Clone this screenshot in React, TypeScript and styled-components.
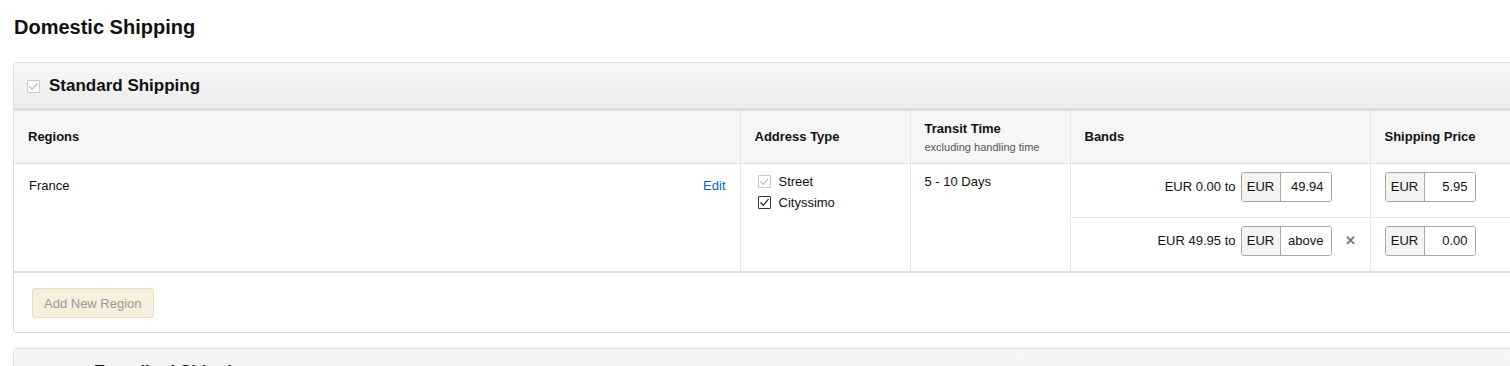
import styled, { createGlobalStyle } from "styled-components";

const GlobalStyle = createGlobalStyle`
    body {
        margin: 0;
        overflow: hidden;
        background: #fff;
        font-family: "Liberation Sans", Arial, sans-serif;
        color: #111;
    }
`;

type Band = { from: string; to: string; price: string; removable: boolean };

const bands: Band[] = [
    { from: "EUR 0.00 to", to: "49.94", price: "5.95", removable: false },
    { from: "EUR 49.95 to", to: "above", price: "0.00", removable: true },
];

const Check = ({ checked = true, disabled = false }: { checked?: boolean; disabled?: boolean }) => (
    <CheckBox $disabled={disabled}>
        {checked && (
            <svg width="11" height="11" viewBox="0 0 11 11">
                <path d="M1.5 5.5 L4.3 8.3 L9.5 2.2" fill="none" stroke="currentColor" strokeWidth="1.2" />
            </svg>
        )}
    </CheckBox>
);

const MoneyInput = ({ value }: { value: string }) => (
    <InputGroup>
        <Addon>EUR</Addon>
        <Value>{value}</Value>
    </InputGroup>
);

export default function App() {
    return (
        <>
            <GlobalStyle />
            <Page>
                <Title>Domestic Shipping</Title>
                <Panel>
                    <PanelHeader>
                        <Check disabled />
                        <span>Standard Shipping</span>
                    </PanelHeader>
                    <Table>
                        <colgroup>
                            <col style={{ width: 726 }} />
                            <col style={{ width: 170 }} />
                            <col style={{ width: 160 }} />
                            <col style={{ width: 300 }} />
                            <col style={{ width: 180 }} />
                        </colgroup>
                        <thead>
                            <tr>
                                <Th>Regions</Th>
                                <Th>Address Type</Th>
                                <Th>
                                    Transit Time
                                    <SubHead>excluding handling time</SubHead>
                                </Th>
                                <Th>Bands</Th>
                                <Th>Shipping Price</Th>
                            </tr>
                        </thead>
                        <tbody>
                            {bands.map((b, i) => (
                                <tr key={b.to}>
                                    {i === 0 && (
                                        <>
                                            <Td rowSpan={2}>
                                                <RegionRow>
                                                    <span>France</span>
                                                    <EditLink href="#">Edit</EditLink>
                                                </RegionRow>
                                            </Td>
                                            <Td rowSpan={2}>
                                                <AddressList>
                                                    <AddressItem>
                                                        <Check disabled />
                                                        Street
                                                    </AddressItem>
                                                    <AddressItem>
                                                        <Check />
                                                        Cityssimo
                                                    </AddressItem>
                                                </AddressList>
                                            </Td>
                                            <Td rowSpan={2}>5 - 10 Days</Td>
                                        </>
                                    )}
                                    <BandTd $last={i === bands.length - 1}>
                                        <BandRow>
                                            <BandLabel>{b.from}</BandLabel>
                                            <MoneyInput value={b.to} />
                                            <RemoveSlot>{b.removable ? "✕" : ""}</RemoveSlot>
                                        </BandRow>
                                    </BandTd>
                                    <BandTd $last={i === bands.length - 1}>
                                        <PriceRow>
                                            <MoneyInput value={b.price} />
                                        </PriceRow>
                                    </BandTd>
                                </tr>
                            ))}
                        </tbody>
                    </Table>
                    <PanelFooter>
                        <AddButton disabled>Add New Region</AddButton>
                    </PanelFooter>
                </Panel>
                <Panel>
                    <PanelHeader $indent>
                        <span>Expedited Shipping</span>
                    </PanelHeader>
                </Panel>
            </Page>
        </>
    );
}

const Page = styled.div`
    padding: 14px 0 0 13px;
    width: 1540px;
`;

const Title = styled.h2`
    margin: 0 0 0 1px;
    font-size: 20px;
    font-weight: 700;
    line-height: 26px;
    color: #111;
`;

const Panel = styled.div`
    margin-top: 22px;
    border: 1px solid #ddd;
    border-radius: 4px;
    overflow: hidden;
    & + & {
        margin-top: 15px;
    }
`;

const PanelHeader = styled.div<{ $indent?: boolean }>`
    display: flex;
    align-items: center;
    gap: 9px;
    box-sizing: border-box;
    height: 48px;
    padding-left: ${({ $indent }) => ($indent ? "80px" : "13px")};
    padding-top: 1px;
    background: linear-gradient(to bottom, #f7f7f7, #ececec);
    border-bottom: 3px solid #ddd;
    font-size: 17px;
    font-weight: 700;
    color: #111;
`;

const CheckBox = styled.span<{ $disabled: boolean }>`
    display: inline-flex;
    align-items: center;
    justify-content: center;
    box-sizing: border-box;
    width: 13px;
    height: 13px;
    flex-shrink: 0;
    border: 1px solid ${({ $disabled }) => ($disabled ? "#c8c8c8" : "#333")};
    border-radius: 1px;
    background: #fff;
    color: ${({ $disabled }) => ($disabled ? "#bdbdbd" : "#222")};
`;

const Table = styled.table`
    border-collapse: collapse;
    table-layout: fixed;
    width: 1536px;
    font-size: 13px;
    border-bottom: 2px solid #ddd;
`;

const Th = styled.th`
    height: 52px;
    padding: 0 14px;
    box-sizing: border-box;
    text-align: left;
    vertical-align: middle;
    background: #f6f6f6;
    font-size: 13px;
    font-weight: 700;
    border-bottom: 1px solid #e2e2e2;
    & + & {
        border-left: 1px solid #e7e7e7;
    }
`;

const SubHead = styled.div`
    margin-top: 5px;
    font-size: 11px;
    font-weight: 400;
    color: #555;
`;

const Td = styled.td`
    padding: 10px 14px;
    vertical-align: top;
    line-height: 15px;
    & + & {
        border-left: 1px solid #e7e7e7;
    }
`;

const BandTd = styled.td<{ $last: boolean }>`
    height: ${({ $last }) => ($last ? "55px" : "54px")};
    box-sizing: border-box;
    padding: 8px 0 0 14px;
    vertical-align: top;
    border-left: 1px solid #e7e7e7;
    border-bottom: ${({ $last }) => ($last ? "none" : "1px solid #e7e7e7")};
`;

const RegionRow = styled.div`
    display: flex;
    justify-content: space-between;
    padding-top: 4px;
    padding-left: 1px;
`;

const EditLink = styled.a`
    color: #0066c0;
    text-decoration: none;
`;

const AddressList = styled.div`
    display: flex;
    flex-direction: column;
    gap: 6px;
    padding-left: 3px;
`;

const AddressItem = styled.label`
    display: flex;
    align-items: center;
    gap: 8px;
`;

const BandRow = styled.div`
    display: flex;
    align-items: center;
    justify-content: flex-end;
`;

const BandLabel = styled.span`
    margin-right: 5px;
`;

const PriceRow = styled.div`
    display: flex;
    align-items: center;
`;

const RemoveSlot = styled.span`
    width: 38px;
    text-align: center;
    color: #777;
    font-size: 13px;
    font-weight: 700;
`;

const InputGroup = styled.div`
    display: flex;
    height: 30px;
    box-sizing: border-box;
    border: 1px solid #a6a6a6;
    border-radius: 3px;
    overflow: hidden;
    font-size: 13px;
`;

const Addon = styled.span`
    display: flex;
    align-items: center;
    justify-content: center;
    width: 39px;
    box-sizing: border-box;
    background: #f3f3f3;
    border-right: 1px solid #a6a6a6;
`;

const Value = styled.span`
    display: flex;
    align-items: center;
    justify-content: flex-end;
    width: 50px;
    padding-right: 7px;
    box-sizing: border-box;
    background: #fff;
`;

const PanelFooter = styled.div`
    padding: 15px 18px 14px;
`;

const AddButton = styled.button`
    height: 30px;
    padding: 0 11px;
    border: 1px solid #e8dcbf;
    border-radius: 3px;
    background: #f7eedd;
    color: #999;
    font-family: inherit;
    font-size: 13px;
`;
